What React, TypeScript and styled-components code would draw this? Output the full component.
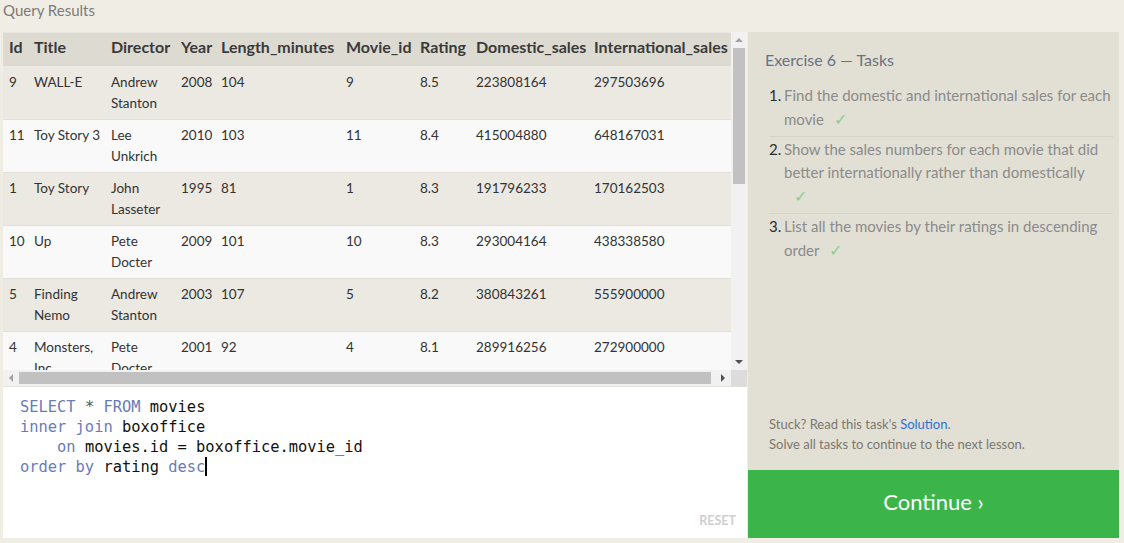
import React from 'react';
import styled, {createGlobalStyle} from 'styled-components';

type Movie = {
    id: number;
    title: string;
    director: string;
    year: number;
    length: number;
    movieId: number;
    rating: string;
    domestic: number;
    international: number;
};

const MOVIES: Movie[] = [
    {id: 9, title: 'WALL-E', director: 'Andrew Stanton', year: 2008, length: 104, movieId: 9, rating: '8.5', domestic: 223808164, international: 297503696},
    {id: 11, title: 'Toy Story 3', director: 'Lee Unkrich', year: 2010, length: 103, movieId: 11, rating: '8.4', domestic: 415004880, international: 648167031},
    {id: 1, title: 'Toy Story', director: 'John Lasseter', year: 1995, length: 81, movieId: 1, rating: '8.3', domestic: 191796233, international: 170162503},
    {id: 10, title: 'Up', director: 'Pete Docter', year: 2009, length: 101, movieId: 10, rating: '8.3', domestic: 293004164, international: 438338580},
    {id: 5, title: 'Finding Nemo', director: 'Andrew Stanton', year: 2003, length: 107, movieId: 5, rating: '8.2', domestic: 380843261, international: 555900000},
    {id: 4, title: 'Monsters, Inc.', director: 'Pete Docter', year: 2001, length: 92, movieId: 4, rating: '8.1', domestic: 289916256, international: 272900000},
];

const COLUMNS = [
    {label: 'Id', width: 25},
    {label: 'Title', width: 77},
    {label: 'Director', width: 70},
    {label: 'Year', width: 40},
    {label: 'Length_minutes', width: 125},
    {label: 'Movie_id', width: 74},
    {label: 'Rating', width: 56},
    {label: 'Domestic_sales', width: 118},
    {label: 'International_sales', width: 150},
];

const TASKS = [
    'Find the domestic and international sales for each movie',
    'Show the sales numbers for each movie that did better internationally rather than domestically',
    'List all the movies by their ratings in descending order',
];

const GlobalStyle = createGlobalStyle`
  html, body {
    margin: 0;
    padding: 0;
    background: #f0ede5;
  }
  body {
    font-family: Lato, "Open Sans", sans-serif;
    width: 1124px;
    height: 543px;
    overflow: hidden;
  }
`;

function App() {
    return (
        <>
            <GlobalStyle/>
            <Page>
                <Caption>Query Results</Caption>
                <Workspace>
                    <LeftColumn>
                        <ResultsFrame>
                            <Viewport>
                                <Table>
                                    <colgroup>
                                        {COLUMNS.map((c) => <col key={c.label} style={{width: c.width}}/>)}
                                    </colgroup>
                                    <thead>
                                    <tr>
                                        {COLUMNS.map((c) => <Th key={c.label}>{c.label}</Th>)}
                                    </tr>
                                    </thead>
                                    <tbody>
                                    {MOVIES.map((m, i) => (
                                        <Row key={m.id} $odd={i % 2 === 0}>
                                            <Td>{m.id}</Td>
                                            <Td>{m.title}</Td>
                                            <Td>{m.director}</Td>
                                            <Td>{m.year}</Td>
                                            <Td>{m.length}</Td>
                                            <Td>{m.movieId}</Td>
                                            <Td>{m.rating}</Td>
                                            <Td>{m.domestic}</Td>
                                            <Td>{m.international}</Td>
                                        </Row>
                                    ))}
                                    </tbody>
                                </Table>
                            </Viewport>
                            <VBar>
                                <Arrow $dir="up"/>
                                <VTrack>
                                    <VThumb/>
                                </VTrack>
                                <Arrow $dir="down"/>
                            </VBar>
                            <HBar>
                                <Arrow $dir="left"/>
                                <HTrack>
                                    <HThumb/>
                                </HTrack>
                                <Arrow $dir="right"/>
                            </HBar>
                            <Corner/>
                        </ResultsFrame>
                        <Editor>
                            <Code>
                                <Kw>SELECT</Kw> <Op>*</Op> <Kw>FROM</Kw> movies{'\n'}
                                <Kw>inner join</Kw> boxoffice{'\n'}
                                {'    '}<Kw>on</Kw> movies.id = boxoffice.movie_id{'\n'}
                                <Kw>order by</Kw> rating <Kw>desc</Kw><Caret/>
                            </Code>
                            <Reset>RESET</Reset>
                        </Editor>
                    </LeftColumn>
                    <RightColumn>
                        <TaskPanel>
                            <Heading>Exercise 6 — Tasks</Heading>
                            <TaskList>
                                {TASKS.map((t, i) => (
                                    <Task key={i} $last={i === TASKS.length - 1}>
                                        <TaskNum>{i + 1}.</TaskNum>
                                        <TaskText>{t}<Check>✓</Check></TaskText>
                                    </Task>
                                ))}
                            </TaskList>
                            <Spacer/>
                            <Hint>
                                Stuck? Read this task's <SolutionLink>Solution</SolutionLink>.<br/>
                                Solve all tasks to continue to the next lesson.
                            </Hint>
                        </TaskPanel>
                        <ContinueButton>Continue ›</ContinueButton>
                    </RightColumn>
                </Workspace>
            </Page>
        </>
    );
}

const Page = styled.div`
  display: flex;
  flex-direction: column;
  padding: 0 5px 5px 3px;
  height: 543px;
  box-sizing: border-box;
`;

const Caption = styled.div`
  height: 32px;
  line-height: 21px;
  font-size: 15px;
  color: #7b7b7b;
`;

const Workspace = styled.div`
  flex: 1;
  display: grid;
  grid-template-columns: 744px 1fr;
  gap: 1px;
  min-height: 0;
`;

const LeftColumn = styled.div`
  display: flex;
  flex-direction: column;
  min-height: 0;
`;

const ResultsFrame = styled.div`
  display: grid;
  grid-template-columns: 728px 16px;
  grid-template-rows: 338px 16px;
  border-bottom: 1px solid #e4e2da;
`;

const Viewport = styled.div`
  overflow: hidden;
  background: #f9f9f8;
`;

const Table = styled.table`
  table-layout: fixed;
  border-collapse: collapse;
  width: 735px;
  font-size: 13.5px;
  color: #333;
`;

const Th = styled.th`
  background: #dddbd1;
  text-align: left;
  font-size: 16px;
  font-weight: 700;
  color: #3a3a3a;
  height: 27px;
  padding: 0 0 6px 6px;
  white-space: nowrap;
  overflow: hidden;
  border-top: 1px solid #e6e4dc;
`;

const Row = styled.tr<{ $odd: boolean }>`
  background: ${(p) => (p.$odd ? '#ebe9e2' : '#f9f9f9')};
  border-bottom: 1px solid #e2e0d8;

  &:first-child td {
    padding-top: 6px;
  }
`;

const Td = styled.td`
  vertical-align: top;
  padding: 5px 1px 5px 6px;
  line-height: 21px;
`;

const VBar = styled.div`
  display: flex;
  flex-direction: column;
  background: #f1f1f1;
`;

const VTrack = styled.div`
  flex: 1;
  padding: 0 2px;
`;

const VThumb = styled.div`
  height: 136px;
  background: #c1c1c1;
`;

const HBar = styled.div`
  display: flex;
  background: #f1f1f1;
`;

const HTrack = styled.div`
  flex: 1;
  padding: 2px 0;
  display: flex;
`;

const HThumb = styled.div`
  width: 692px;
  background: #c1c1c1;
`;

const Corner = styled.div`
  background: #dcdcdc;
`;

const arrowBorders: Record<string, string> = {
    up: 'border-left: 4px solid transparent; border-right: 4px solid transparent; border-bottom: 4px solid #a3a3a3;',
    down: 'border-left: 4px solid transparent; border-right: 4px solid transparent; border-top: 4px solid #505050;',
    left: 'border-top: 4px solid transparent; border-bottom: 4px solid transparent; border-right: 4px solid #a3a3a3;',
    right: 'border-top: 4px solid transparent; border-bottom: 4px solid transparent; border-left: 4px solid #505050;',
};

const Arrow = styled.div<{ $dir: 'up' | 'down' | 'left' | 'right' }>`
  width: 16px;
  height: 16px;
  flex: none;
  display: flex;
  align-items: center;
  justify-content: center;

  &::after {
    content: '';
    width: 0;
    height: 0;
    ${(p) => arrowBorders[p.$dir]}
  }
`;

const Editor = styled.div`
  flex: 1;
  background: #fff;
  display: flex;
  flex-direction: column;
  padding: 10px 10px 10px 17px;
  box-sizing: border-box;
`;

const Code = styled.pre`
  margin: 0;
  flex: 1;
  font-family: "DejaVu Sans Mono", "Liberation Mono", monospace;
  font-size: 15.4px;
  line-height: 20px;
  color: #111;
`;

const Kw = styled.span`
  color: #6a7bb8;
`;

const Op = styled.span`
  color: #555;
`;

const Caret = styled.span`
  display: inline-block;
  width: 2px;
  height: 19px;
  background: #000;
  vertical-align: -4px;
`;

const Reset = styled.div`
  align-self: flex-end;
  font-size: 12.5px;
  font-weight: 700;
  color: #cfcfcf;
  margin-right: 1px;
`;

const RightColumn = styled.div`
  display: flex;
  flex-direction: column;
  width: 371px;
`;

const TaskPanel = styled.div`
  flex: 1;
  background: #e2e0d5;
  display: flex;
  flex-direction: column;
  padding: 17px 6px 16px 17px;
`;

const Heading = styled.div`
  font-size: 16px;
  color: #687282;
  line-height: 22px;
  margin-bottom: 12px;
`;

const TaskList = styled.ol`
  list-style: none;
  margin: 0;
  padding: 0 0 0 4px;
`;

const Task = styled.li<{ $last: boolean }>`
  display: flex;
  font-size: 15px;
  line-height: 23px;
  padding: 1px 0 5px;
  border-bottom: ${(p) => (p.$last ? 'none' : '1px solid #d6d4c9')};
`;

const TaskNum = styled.span`
  width: 15px;
  flex: none;
  color: #2c2c2c;
`;

const TaskText = styled.span`
  flex: 1;
  color: #8b8b8b;
`;

const Check = styled.span`
  display: inline-block;
  width: 20px;
  color: #86d18f;
  margin-left: 10px;
  font-size: 16px;
`;

const Spacer = styled.div`
  flex: 1;
`;

const Hint = styled.div`
  font-size: 13px;
  line-height: 20px;
  color: #7c7770;
  padding-left: 4px;
`;

const SolutionLink = styled.span`
  color: #2d6fd6;
`;

const ContinueButton = styled.div`
  height: 68px;
  padding-bottom: 5px;
  box-sizing: border-box;
  background: #3bb54a;
  color: #fff;
  font-size: 22px;
  display: flex;
  align-items: center;
  justify-content: center;
`;

export default App;
